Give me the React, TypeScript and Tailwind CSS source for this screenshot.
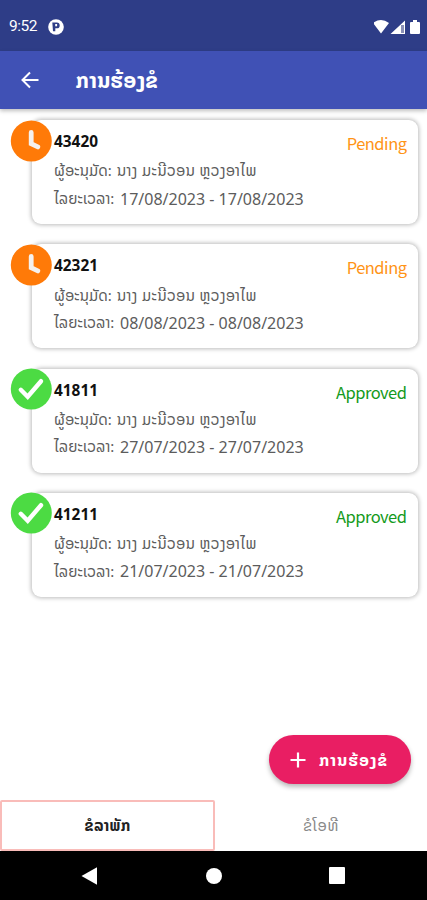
import React from "react";

const lao = "font-['Noto_Sans_Lao','Noto_Sans','DejaVu_Sans',sans-serif]";

type Request = { id: string; date: string; status: "Pending" | "Approved" };

const requests: Request[] = [
  { id: "43420", date: "17/08/2023", status: "Pending" },
  { id: "42321", date: "08/08/2023", status: "Pending" },
  { id: "41811", date: "27/07/2023", status: "Approved" },
  { id: "41211", date: "21/07/2023", status: "Approved" },
];

function StatusIcon({ status }: { status: Request["status"] }) {
  const pending = status === "Pending";
  return (
    <svg viewBox="0 0 42 42" className="absolute -left-[22px] -top-[0.5px] size-[42px]" fill="none" stroke="#fff">
      <circle cx="21.3" cy="21" r="20.5" fill={pending ? "#ff7a08" : "#4cdb43"} stroke="none" />
      {pending ? (
        <path d="M21.2 12.4v11.3l6.6 3.2" stroke="#f5f1ee" strokeWidth="4.8" strokeLinecap="round" strokeLinejoin="miter" />
      ) : (
        <path d="m10.8 21.8 6.9 7L31 13.2" strokeWidth="4.4" strokeLinecap="round" />
      )}
    </svg>
  );
}

function RequestCard({ id, date, status }: Request) {
  return (
    <article className="relative ml-8 mr-[9px] h-[104px] rounded-[9px] bg-white pl-[22px] pr-[11px] shadow-[0_0_4px_1px_rgba(0,0,0,0.27)]">
      <StatusIcon status={status} />
      <div className="flex h-[37.5px] justify-between">
        <span className="pt-[11px] font-['Noto_Sans',sans-serif] text-[15.4px] font-bold leading-[22px] text-[#111]">{id}</span>
        <span className={`pt-[11px] font-['Noto_Sans_CJK_SC',sans-serif] text-[16.5px] leading-[24px] tracking-[-0.5px] ${status === "Pending" ? "mr-[0.5px] text-[#ff9416]" : "mr-[0.5px] text-[#149a20]"}`}>{status}</span>
      </div>
      <div className={`${lao} flex h-[28px] items-center whitespace-nowrap text-[15px] text-[#5c5c5c]`}>
        <span className="w-[63px]">ຜູ້ອະນຸມັດ:</span>
        <span className="tracking-[0.35px]">ນາງ ມະນີວອນ ຫຼວງອາໄພ</span>
      </div>
      <div className={`${lao} flex h-[26px] items-center whitespace-nowrap text-[15px] text-[#5c5c5c]`}>
        <span className="w-[66px] pt-px">ໄລຍະເວລາ:</span>
        <span className="font-['Noto_Sans',sans-serif] text-[16px]">{date} - {date}</span>
      </div>
    </article>
  );
}

export default function App() {
  return (
    <div className="flex h-[900px] w-[427px] flex-col overflow-hidden bg-white">
      <div className="flex h-[51px] shrink-0 items-center bg-[#2e3d87] pl-[9px] pr-[5px] pt-[2px] text-white">
        <span className="w-[39px] font-['Roboto',sans-serif] text-[15.5px] tracking-[-0.5px]">9:52</span>
        <svg viewBox="0 0 16 16" className="size-4">
          <circle cx="8" cy="8" r="7.8" fill="#fff" />
          <path d="M4.300 3.500h4.500a2.900 2.900 0 0 1 0 5.800H7.300v3H5Z" fill="#2e3d87" />
          <path d="M7.200 5h1.900v2.300H7.200Z" fill="#fff" />
        </svg>
        <svg viewBox="0 0 48 16" className="ml-auto h-4 w-12" fill="#fff">
          <path d="M-1 4Q7-2 15 4L7 14.5ZM16.500 15 31 1.500v13.500ZM37 3h2V1h4v2h2q1 0 1 1v10q0 1-1 1h-8q-1 0-1-1V4q0-1 1-1Z" />
          <path d="M27 6h3v8h-3Z" fill="#8b91b7" />
        </svg>
      </div>
      <header className="z-10 flex h-[58px] shrink-0 items-center bg-[#4051b5] pl-[21px] text-white shadow-[0_2px_4px_rgba(0,0,0,0.25)]">
        <svg viewBox="0 0 18 18" className="size-[18px]" fill="none" stroke="#fff" strokeWidth="2">
          <path d="M17.5 9H2M9 1.5 1.5 9 9 16.5" />
        </svg>
        <h1 className={`${lao} ml-[36.5px] mt-[2px] whitespace-nowrap text-[21px] font-bold tracking-[0.4px]`}>ການຮ້ອງຂໍ</h1>
      </header>
      <main className="flex min-h-0 flex-1 flex-col gap-[20.3px] pt-[11px]">
        {requests.map((request) => <RequestCard key={request.id} {...request} />)}
        <button className="mb-[16px] mr-[16px] mt-auto flex h-[49px] w-[142px] shrink-0 items-center self-end rounded-full bg-[#e91e63] pl-[21px] text-white shadow-[0_3px_5px_rgba(0,0,0,0.28)]">
          <svg viewBox="0 0 16 16" className="size-4" stroke="#fff" strokeWidth="2.2"><path d="M8 .5v15M.5 8h15" /></svg>
          <span className={`${lao} ml-[13px] whitespace-nowrap text-[16px] font-bold tracking-[1.2px]`}>ການຮ້ອງຂໍ</span>
        </button>
      </main>
      <nav className={`${lao} flex h-[51px] shrink-0 text-[15px]`}>
        <button className="h-[50.5px] w-[215px] rounded-[2px] border-2 border-[#f9bcb9] pt-px font-bold tracking-[0.3px] text-[#222]">ຂໍລາພັກ</button>
        <button className="h-full flex-1 pt-px tracking-[0.6px] text-[#888]">ຂໍໂອທີ</button>
      </nav>
      <footer className="flex h-[49px] shrink-0 items-center bg-black pl-[81px]">
        <svg viewBox="0 0 16 18" className="h-[18px] w-4" fill="#fff"><path d="M.5 9 16 .2v17.6Z" /></svg>
        <span className="ml-[109px] size-4 rounded-full bg-white" />
        <span className="ml-[107px] h-[17px] w-4 rounded-[1px] bg-white" />
      </footer>
    </div>
  );
}
